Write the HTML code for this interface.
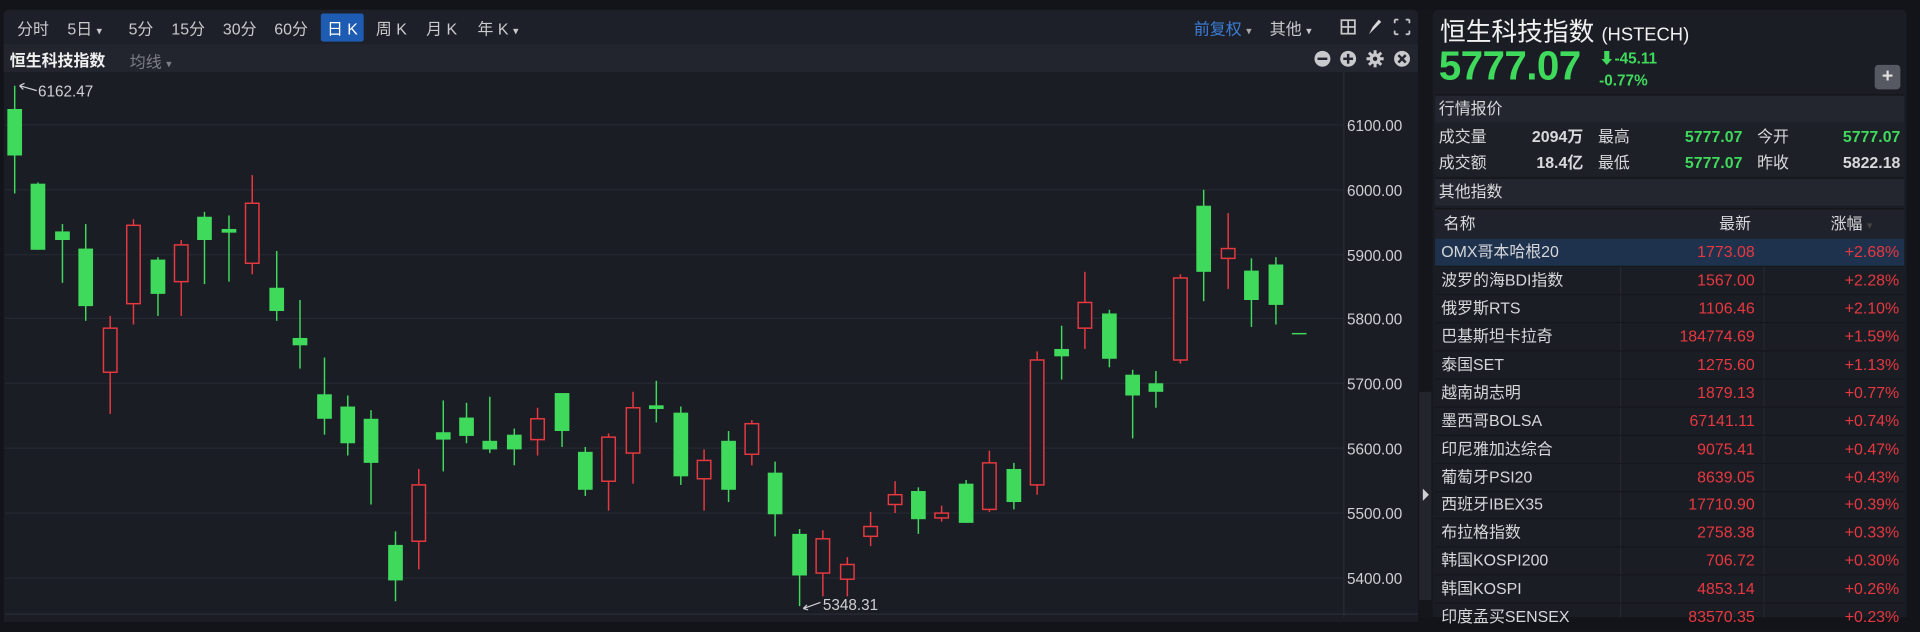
<!DOCTYPE html>
<html><head><meta charset="utf-8"><style>
html,body{margin:0;padding:0;width:1920px;height:617px;overflow:hidden;background:#121419;}
#w{position:absolute;left:0;top:0;width:1568px;height:504px;transform:scale(1.22449);transform-origin:0 0;font-family:"Liberation Sans","Noto Sans CJK SC",sans-serif;color:#d8d9dc;}
.a{position:absolute;white-space:nowrap;}
.tb span{position:absolute;top:13px;font-size:13px;color:#c9cacd;}
.g{color:#3fd95c}.r{color:#e8383f}
.row{position:absolute;left:1172px;width:383px;height:22px;border-bottom:1px solid #15171b;font-size:13px;}
.row span{position:absolute;top:0;height:22px;line-height:22px;}
.row .n{left:5px;color:#d6d7da}
.row .p{right:122px;color:#e8383f}
.row .c{right:4px;color:#e8383f}
</style></head><body><div id="w">
<div class="a" style="left:3px;top:8px;width:1155px;height:500px;background:#1b1d25;border-radius:4px 4px 0 0;"></div>
<div class="a" style="left:3px;top:8px;width:1155px;height:28px;background:#1d2028;border-radius:4px 4px 0 0;"></div>
<div class="a" style="left:3px;top:36px;width:1155px;height:23px;background:#22252d;"></div>
<div class="tb">
<span style="left:14px">分时</span><span style="left:55px">5日 <small style="font-size:9px">▾</small></span>
<span style="left:105px">5分</span><span style="left:140px">15分</span><span style="left:182px">30分</span><span style="left:224px">60分</span>
<span style="left:262px;top:11px;background:#1e5cb3;color:#fff;padding:2px 5px;border-radius:2px;">日 K</span>
<span style="left:307px">周 K</span><span style="left:348px">月 K</span><span style="left:390px">年 K <small style="font-size:9px">▾</small></span>
<span style="left:975px;color:#3b7fd8">前复权 <small style="font-size:9px;color:#aaa">▾</small></span>
<span style="left:1037px">其他 <small style="font-size:9px">▾</small></span>
</div>
<svg class="a" style="left:0;top:0" width="1160" height="60">
<g fill="none" stroke="#c8c9cc" stroke-width="1.4">
<rect x="1095.5" y="16.5" width="11" height="11"/><line x1="1101" y1="16" x2="1101" y2="28"/><line x1="1095" y1="22" x2="1107" y2="22"/>
</g>
<path d="M1118 28 l3-6 5-6 2 2-6 6z" fill="#d8d9dc"/>
<g stroke="#c8c9cc" stroke-width="1.4" fill="none"><path d="M1139 16h3M1139 16v3M1151 16h-3M1151 16v3M1139 28h3M1139 28v-3M1151 28h-3M1151 28v-3"/></g>
<g fill="#c8c9cc"><circle cx="1080" cy="48" r="6.5"/><circle cx="1101" cy="48" r="6.5"/><circle cx="1145" cy="48" r="6.5"/><circle cx="1123" cy="48" r="4.5"/></g>
<g stroke="#22252d" stroke-width="2"><line x1="1076" y1="48" x2="1084" y2="48"/><line x1="1097" y1="48" x2="1105" y2="48"/><line x1="1101" y1="44" x2="1101" y2="52"/><line x1="1142" y1="45" x2="1148" y2="51"/><line x1="1148" y1="45" x2="1142" y2="51"/></g>
<g stroke="#c8c9cc" stroke-width="2.4"><line x1="1123" y1="41" x2="1123" y2="55"/><line x1="1116" y1="48" x2="1130" y2="48"/><line x1="1118" y1="43" x2="1128" y2="53"/><line x1="1128" y1="43" x2="1118" y2="53"/></g>
<circle cx="1123" cy="48" r="1.8" fill="#22252d"/>
</svg>
<div class="a" style="left:8px;top:39px;font-size:13px;font-weight:bold;color:#f0f0f0">恒生科技指数</div>
<div class="a" style="left:106px;top:40px;font-size:13px;color:#7d7f85">均线 <small style="font-size:9px">▾</small></div>
<svg class="a" style="left:0;top:0" width="1160" height="504">
<g stroke="#252830" stroke-width="1">
<line x1="4" y1="102" x2="1097" y2="102"/><line x1="4" y1="155" x2="1097" y2="155"/><line x1="4" y1="208" x2="1097" y2="208"/><line x1="4" y1="260" x2="1097" y2="260"/><line x1="4" y1="313" x2="1097" y2="313"/><line x1="4" y1="366" x2="1097" y2="366"/><line x1="4" y1="419" x2="1097" y2="419"/><line x1="4" y1="472" x2="1097" y2="472"/>
</g>
<line x1="1097.5" y1="59" x2="1097.5" y2="504" stroke="#2a2d35"/>
<line x1="4" y1="501.5" x2="1158" y2="501.5" stroke="#2a2d35"/>
<g font-size="12.5" fill="#cfd0d3" font-family="Liberation Sans,sans-serif">
<text x="1100" y="107">6100.00</text><text x="1100" y="160">6000.00</text><text x="1100" y="213">5900.00</text><text x="1100" y="265">5800.00</text><text x="1100" y="318">5700.00</text><text x="1100" y="371">5600.00</text><text x="1100" y="424">5500.00</text><text x="1100" y="477">5400.00</text>
<text x="31" y="79">6162.47</text><text x="672" y="498">5348.31</text>
</g>
<g stroke="#cfd0d3" stroke-width="1" fill="none"><path d="M30 74 L16 70 M16 70 l4 -2 M16 70 l3 3"/><path d="M670 492 L656 497 M656 497 l3 -3 M656 497 l4 1"/></g>
<g stroke="#3fd95c" stroke-width="1.2">
<line x1="12" y1="70" x2="12" y2="158"/><line x1="31" y1="149" x2="31" y2="204"/><line x1="51" y1="183" x2="51" y2="231"/><line x1="70" y1="183" x2="70" y2="262"/>
<line x1="129" y1="210" x2="129" y2="258"/><line x1="167" y1="173" x2="167" y2="232"/><line x1="187" y1="176" x2="187" y2="230"/><line x1="226" y1="205" x2="226" y2="262"/>
<line x1="245" y1="245" x2="245" y2="301"/><line x1="265" y1="292" x2="265" y2="355"/><line x1="284" y1="323" x2="284" y2="372"/><line x1="303" y1="335" x2="303" y2="412"/>
<line x1="323" y1="434" x2="323" y2="491"/><line x1="362" y1="327" x2="362" y2="385"/><line x1="381" y1="329" x2="381" y2="362"/><line x1="400" y1="324" x2="400" y2="370"/>
<line x1="420" y1="350" x2="420" y2="380"/><line x1="459" y1="321" x2="459" y2="365"/><line x1="478" y1="365" x2="478" y2="405"/><line x1="536" y1="311" x2="536" y2="345"/>
<line x1="556" y1="332" x2="556" y2="396"/><line x1="595" y1="352" x2="595" y2="410"/><line x1="633" y1="377" x2="633" y2="438"/><line x1="653" y1="432" x2="653" y2="495"/>
<line x1="750" y1="398" x2="750" y2="436"/><line x1="789" y1="392" x2="789" y2="427"/><line x1="828" y1="378" x2="828" y2="416"/><line x1="867" y1="266" x2="867" y2="310"/>
<line x1="906" y1="253" x2="906" y2="300"/><line x1="925" y1="302" x2="925" y2="358"/><line x1="944" y1="303" x2="944" y2="333"/><line x1="983" y1="155" x2="983" y2="246"/>
<line x1="1022" y1="211" x2="1022" y2="267"/><line x1="1042" y1="210" x2="1042" y2="265"/><line x1="1055" y1="272.5" x2="1067" y2="272.5"/>
</g>
<g fill="#3fd95c">
<rect x="6" y="89" width="12" height="38"/><rect x="25" y="150" width="12" height="54"/><rect x="45" y="189" width="12" height="7"/><rect x="64" y="203" width="12" height="47"/>
<rect x="123" y="212" width="12" height="28"/><rect x="161" y="177" width="12" height="19"/><rect x="181" y="187" width="12" height="3"/><rect x="220" y="235" width="12" height="19"/>
<rect x="239" y="276" width="12" height="6"/><rect x="259" y="322" width="12" height="20"/><rect x="278" y="332" width="12" height="30"/><rect x="297" y="342" width="12" height="36"/>
<rect x="317" y="445" width="12" height="29"/><rect x="356" y="353" width="12" height="6"/><rect x="375" y="341" width="12" height="15"/><rect x="394" y="360" width="12" height="7"/>
<rect x="414" y="355" width="12" height="12"/><rect x="453" y="321" width="12" height="31"/><rect x="472" y="369" width="12" height="31"/><rect x="530" y="331" width="12" height="3"/>
<rect x="550" y="337" width="12" height="52"/><rect x="589" y="360" width="12" height="40"/><rect x="627" y="386" width="12" height="34"/><rect x="647" y="436" width="12" height="34"/>
<rect x="744" y="401" width="12" height="23"/><rect x="783" y="395" width="12" height="32"/><rect x="822" y="383" width="12" height="27"/><rect x="861" y="285" width="12" height="6"/>
<rect x="900" y="256" width="12" height="37"/><rect x="919" y="306" width="12" height="17"/><rect x="938" y="313" width="12" height="7"/><rect x="977" y="168" width="12" height="54"/>
<rect x="1016" y="221" width="12" height="24"/><rect x="1036" y="216" width="12" height="33"/>
</g>
<g stroke="#e8383f" stroke-width="1.2" fill="none">
<line x1="90" y1="258" x2="90" y2="338"/><rect x="84.5" y="268" width="11" height="36" fill="#1b1d25"/>
<line x1="109" y1="179" x2="109" y2="265"/><rect x="103.5" y="184" width="11" height="64" fill="#1b1d25"/>
<line x1="148" y1="196" x2="148" y2="258"/><rect x="142.5" y="200" width="11" height="30" fill="#1b1d25"/>
<line x1="206" y1="143" x2="206" y2="224"/><rect x="200.5" y="166" width="11" height="49" fill="#1b1d25"/>
<line x1="342" y1="383" x2="342" y2="465"/><rect x="336.5" y="396" width="11" height="46" fill="#1b1d25"/>
<line x1="439" y1="333" x2="439" y2="372"/><rect x="433.5" y="342" width="11" height="17" fill="#1b1d25"/>
<line x1="497" y1="354" x2="497" y2="417"/><rect x="491.5" y="357" width="11" height="36" fill="#1b1d25"/>
<line x1="517" y1="320" x2="517" y2="395"/><rect x="511.5" y="333" width="11" height="37" fill="#1b1d25"/>
<line x1="575" y1="367" x2="575" y2="417"/><rect x="569.5" y="376" width="11" height="15" fill="#1b1d25"/>
<line x1="614" y1="343" x2="614" y2="380"/><rect x="608.5" y="346" width="11" height="25" fill="#1b1d25"/>
<line x1="672" y1="433" x2="672" y2="487"/><rect x="666.5" y="440" width="11" height="28" fill="#1b1d25"/>
<line x1="692" y1="455" x2="692" y2="487"/><rect x="686.5" y="461" width="11" height="12" fill="#1b1d25"/>
<line x1="711" y1="418" x2="711" y2="446"/><rect x="705.5" y="430" width="11" height="8" fill="#1b1d25"/>
<line x1="731" y1="393" x2="731" y2="419"/><rect x="725.5" y="404" width="11" height="8" fill="#1b1d25"/>
<line x1="769" y1="413" x2="769" y2="426"/><rect x="763.5" y="419" width="11" height="4" fill="#1b1d25"/>
<line x1="808" y1="368" x2="808" y2="418"/><rect x="802.5" y="378" width="11" height="38" fill="#1b1d25"/>
<line x1="847" y1="287" x2="847" y2="404"/><rect x="841.5" y="294" width="11" height="102" fill="#1b1d25"/>
<line x1="886" y1="222" x2="886" y2="285"/><rect x="880.5" y="247" width="11" height="21" fill="#1b1d25"/>
<line x1="964" y1="224" x2="964" y2="297"/><rect x="958.5" y="227" width="11" height="67" fill="#1b1d25"/>
<line x1="1003" y1="174" x2="1003" y2="236"/><rect x="997.5" y="203" width="11" height="8" fill="#1b1d25"/>
</g>
</svg>
<div class="a" style="left:1158px;top:8px;width:12px;height:496px;background:#14161b;"></div>
<div class="a" style="left:1159px;top:320px;width:10px;height:170px;background:#22252c;"></div>
<svg class="a" style="left:1159px;top:397px" width="10" height="14"><path d="M3 2 L8 7 L3 12z" fill="#cfd0d3"/></svg>
<div class="a" style="left:1170px;top:8px;width:387px;height:496px;background:#1b1d25;border-radius:4px 4px 0 0;"></div>
<div class="a" style="left:1176px;top:10px;font-size:21px;color:#f2f2f2">恒生科技指数 <span style="font-size:15px">(HSTECH)</span></div>
<div class="a g" style="left:1175px;top:35px;font-size:33px;font-weight:bold;letter-spacing:-0.5px">5777.07</div>
<div class="a g" style="left:1306px;top:37px;font-size:12.5px;font-weight:bold">⬇-45.11</div>
<div class="a g" style="left:1306px;top:59px;font-size:12.5px;font-weight:bold">-0.77%</div>
<div class="a" style="left:1531px;top:53px;width:21px;height:20px;background:#565961;border-radius:3px;color:#e0e0e0;font-size:16px;font-weight:bold;text-align:center;line-height:20px">+</div>
<div class="a" style="left:1172px;top:77px;width:383px;height:22px;background:#23262e;border-top:1px solid #121418;"></div>
<div class="a" style="left:1175px;top:78px;font-size:13px;line-height:22px">行情报价</div>
<div class="a" style="left:1172px;top:100px;width:383px;height:44px;background:#1d2027;"></div>
<div class="a" style="left:1175px;top:101px;font-size:13px;line-height:21px">成交量<br>成交额</div>
<div class="a" style="left:1230px;top:101px;width:63px;text-align:right;font-size:13px;line-height:21px;font-weight:bold">2094万<br>18.4亿</div>
<div class="a" style="left:1305px;top:101px;font-size:13px;line-height:21px">最高<br>最低</div>
<div class="a g" style="left:1350px;top:101px;width:73px;text-align:right;font-size:13px;line-height:21px;font-weight:bold">5777.07<br>5777.07</div>
<div class="a" style="left:1435px;top:101px;font-size:13px;line-height:21px">今开<br>昨收</div>
<div class="a" style="left:1480px;top:101px;width:72px;text-align:right;font-size:13px;line-height:21px;font-weight:bold"><span class="g">5777.07</span><br>5822.18</div>
<div class="a" style="left:1172px;top:145px;width:383px;height:22px;background:#23262e;border-top:1px solid #121418;"></div>
<div class="a" style="left:1175px;top:146px;font-size:13px;line-height:22px">其他指数</div>
<div class="a" style="left:1172px;top:170px;width:383px;height:24px;background:#1f222a;border-top:1px solid #121418;"></div>
<div class="a" style="left:1179px;top:171px;font-size:13px;line-height:23px">名称</div>
<div class="a" style="left:1404px;top:171px;font-size:13px;line-height:23px">最新</div>
<div class="a" style="left:1495px;top:171px;font-size:13px;line-height:23px">涨幅 <span style="color:#444;font-size:9px">▾</span></div>
<div class="a" style="left:1172px;top:195px;width:383px;height:309px;background:#1b1d25;"></div>
<div class="a" style="left:1323px;top:195px;width:1px;height:309px;background:#262930;"></div>
<div class="a" style="left:1440px;top:195px;width:1px;height:309px;background:#262930;"></div>
<div class="row" style="top:195px;background:#1f324d"><span class="n">OMX哥本哈根20</span><span class="p">1773.08</span><span class="c">+2.68%</span></div>
<div class="row" style="top:218px"><span class="n">波罗的海BDI指数</span><span class="p">1567.00</span><span class="c">+2.28%</span></div>
<div class="row" style="top:241px"><span class="n">俄罗斯RTS</span><span class="p">1106.46</span><span class="c">+2.10%</span></div>
<div class="row" style="top:264px"><span class="n">巴基斯坦卡拉奇</span><span class="p">184774.69</span><span class="c">+1.59%</span></div>
<div class="row" style="top:287px"><span class="n">泰国SET</span><span class="p">1275.60</span><span class="c">+1.13%</span></div>
<div class="row" style="top:310px"><span class="n">越南胡志明</span><span class="p">1879.13</span><span class="c">+0.77%</span></div>
<div class="row" style="top:333px"><span class="n">墨西哥BOLSA</span><span class="p">67141.11</span><span class="c">+0.74%</span></div>
<div class="row" style="top:356px"><span class="n">印尼雅加达综合</span><span class="p">9075.41</span><span class="c">+0.47%</span></div>
<div class="row" style="top:379px"><span class="n">葡萄牙PSI20</span><span class="p">8639.05</span><span class="c">+0.43%</span></div>
<div class="row" style="top:401px"><span class="n">西班牙IBEX35</span><span class="p">17710.90</span><span class="c">+0.39%</span></div>
<div class="row" style="top:424px"><span class="n">布拉格指数</span><span class="p">2758.38</span><span class="c">+0.33%</span></div>
<div class="row" style="top:447px"><span class="n">韩国KOSPI200</span><span class="p">706.72</span><span class="c">+0.30%</span></div>
<div class="row" style="top:470px"><span class="n">韩国KOSPI</span><span class="p">4853.14</span><span class="c">+0.26%</span></div>
<div class="row" style="top:493px"><span class="n">印度孟买SENSEX</span><span class="p">83570.35</span><span class="c">+0.23%</span></div>
</div></body></html>
